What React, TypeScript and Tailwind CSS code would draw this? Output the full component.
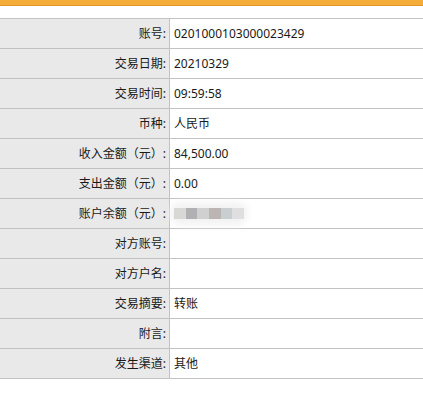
import React from "react";

const rows: { label: string; value: React.ReactNode }[] = [
    { label: "账号:", value: "0201000103000023429" },
    { label: "交易日期:", value: "20210329" },
    { label: "交易时间:", value: "09:59:58" },
    { label: "币种:", value: "人民币" },
    { label: "收入金额（元）:", value: "84,500.00" },
    { label: "支出金额（元）:", value: "0.00" },
    { label: "账户余额（元）:", value: "masked" },
    { label: "对方账号:", value: "" },
    { label: "对方户名:", value: "" },
    { label: "交易摘要:", value: "转账" },
    { label: "附言:", value: "" },
    { label: "发生渠道:", value: "其他" },
];

function Masked() {
    // blurred balance, drawn as mosaic blocks
    return (
        <div className="relative h-[11px] w-[70px]">
            <div className="absolute -inset-x-[4px] -inset-y-[6px] rounded-full bg-[#f3f3f3] blur-[3px]" />
            <div className="relative flex h-full">
                <div className="flex-1 bg-[#d8d8d6]" />
                <div className="flex-1 bg-[#b1b1b3]" />
                <div className="flex-1 bg-[#cfd0cf]" />
                <div className="flex-1 bg-[#bbb6b3]" />
                <div className="flex-1 bg-[#c9ced1]" />
                <div className="flex-1 bg-[#dfdfdf]" />
            </div>
        </div>
    );
}

export default function App() {
    return (
        <div
            className="h-[399px] w-full bg-white text-[12px] text-[#1a1a1a]"
            style={{ fontFamily: '"Noto Sans", "Noto Sans CJK SC", sans-serif' }}
        >
            <div className="h-[6px] border-b border-[#e5962a] bg-[#f5ad3a]" />
            <div className="mt-[12px] grid grid-cols-[170px_1fr] border-t border-[#c2c2c2]">
                {rows.map((r) => (
                    <React.Fragment key={r.label}>
                        <div className="flex h-[30px] items-center justify-end border-b border-r border-[#c2c2c2] bg-[#e8e9e8] pr-[3px]">
                            {r.label}
                        </div>
                        <div className="flex h-[30px] items-center border-b border-[#c2c2c2] pl-[4px]">
                            {r.value === "masked" ? <Masked /> : r.value}
                        </div>
                    </React.Fragment>
                ))}
            </div>
        </div>
    );
}
